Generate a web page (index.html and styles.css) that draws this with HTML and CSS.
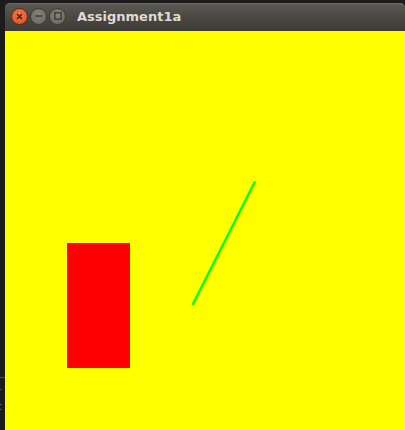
FILE: index.html
```html
<!DOCTYPE html>
<html>
<head>
<meta charset="utf-8">
<link rel="stylesheet" href="styles.css">
</head>
<body>
<div class="screen">
  <div class="side">
    <div class="side-rule"></div>
    <div class="side-glyph">l</div>
    <div class="side-blue">t</div>
  </div>
  <div class="window">
    <div class="titlebar">
      <div class="buttons">
        <span class="btn close"><svg width="9" height="9" viewBox="0 0 9 9"><path d="M2 2 L7 7 M7 2 L2 7" stroke="#4a2010" stroke-width="1.5"/></svg></span>
        <span class="btn"><svg width="10" height="10" viewBox="0 0 10 10"><path d="M1.5 5 H8.5" stroke="#3c3b37" stroke-width="1.5"/></svg></span>
        <span class="btn"><svg width="10" height="10" viewBox="0 0 10 10"><rect x="1.8" y="1.8" width="6.4" height="6.4" fill="none" stroke="#3c3b37" stroke-width="1.4"/></svg></span>
      </div>
      <span class="title">Assignment1a</span>
    </div>
    <div class="canvas">
      <svg class="drawing" width="400" height="399" viewBox="0 0 400 399">
        <rect x="62" y="212" width="63" height="125" fill="#ff0000"/>
        <line x1="250" y1="150.5" x2="187.5" y2="274" stroke="#00ff00" stroke-width="2.4"/>
      </svg>
    </div>
  </div>
</div>
</body>
</html>
```
FILE: styles.css
```css
html, body {
  margin: 0;
  padding: 0;
  background: #1c1c1c;
  width: 405px;
  height: 430px;
  overflow: hidden;
}
.screen {
  display: flex;
  height: 430px;
  padding-top: 3px;
  box-sizing: border-box;
}
.side {
  width: 5px;
  flex: none;
  display: flex;
  flex-direction: column;
  padding-top: 374px;
  overflow: hidden;
  font-family: "DejaVu Sans Mono", monospace;
  font-size: 11px;
  line-height: 14px;
}
.side-rule {
  height: 1px;
  background: #4a4a4a;
  margin-bottom: 2px;
}
.side-glyph {
  color: #6a6a6a;
  margin-left: -4px;
}
.side-blue {
  color: #3a7fd0;
  margin-left: -4px;
  margin-top: 6px;
}
.window {
  flex: 1;
  display: flex;
  flex-direction: column;
}
.titlebar {
  height: 28px;
  flex: none;
  display: flex;
  align-items: center;
  box-sizing: border-box;
  padding-bottom: 2px;
  border-radius: 5px 5px 0 0;
  background: linear-gradient(#5c5a53, #4a4842 50%, #3d3c37);
  box-shadow: inset 0 1px 0 #6d6a62;
}
.buttons {
  display: flex;
  gap: 2px;
  padding-left: 6px;
}
.btn {
  width: 17px;
  height: 17px;
  border-radius: 50%;
  display: flex;
  align-items: center;
  justify-content: center;
  box-sizing: border-box;
  border: 1px solid #3a3934;
  background: radial-gradient(circle at 50% 35%, #858279, #686660);
}
.btn.close {
  border-color: #5a2c18;
  background: radial-gradient(circle at 50% 35%, #f5764a, #de4f1f);
}
.title {
  margin-left: 11px;
  font-family: "DejaVu Sans", sans-serif;
  font-weight: bold;
  font-size: 13px;
  color: #dfdbd2;
}
.canvas {
  flex: 1;
  background: #ffff00;
  overflow: hidden;
}
.drawing {
  display: block;
}
```
